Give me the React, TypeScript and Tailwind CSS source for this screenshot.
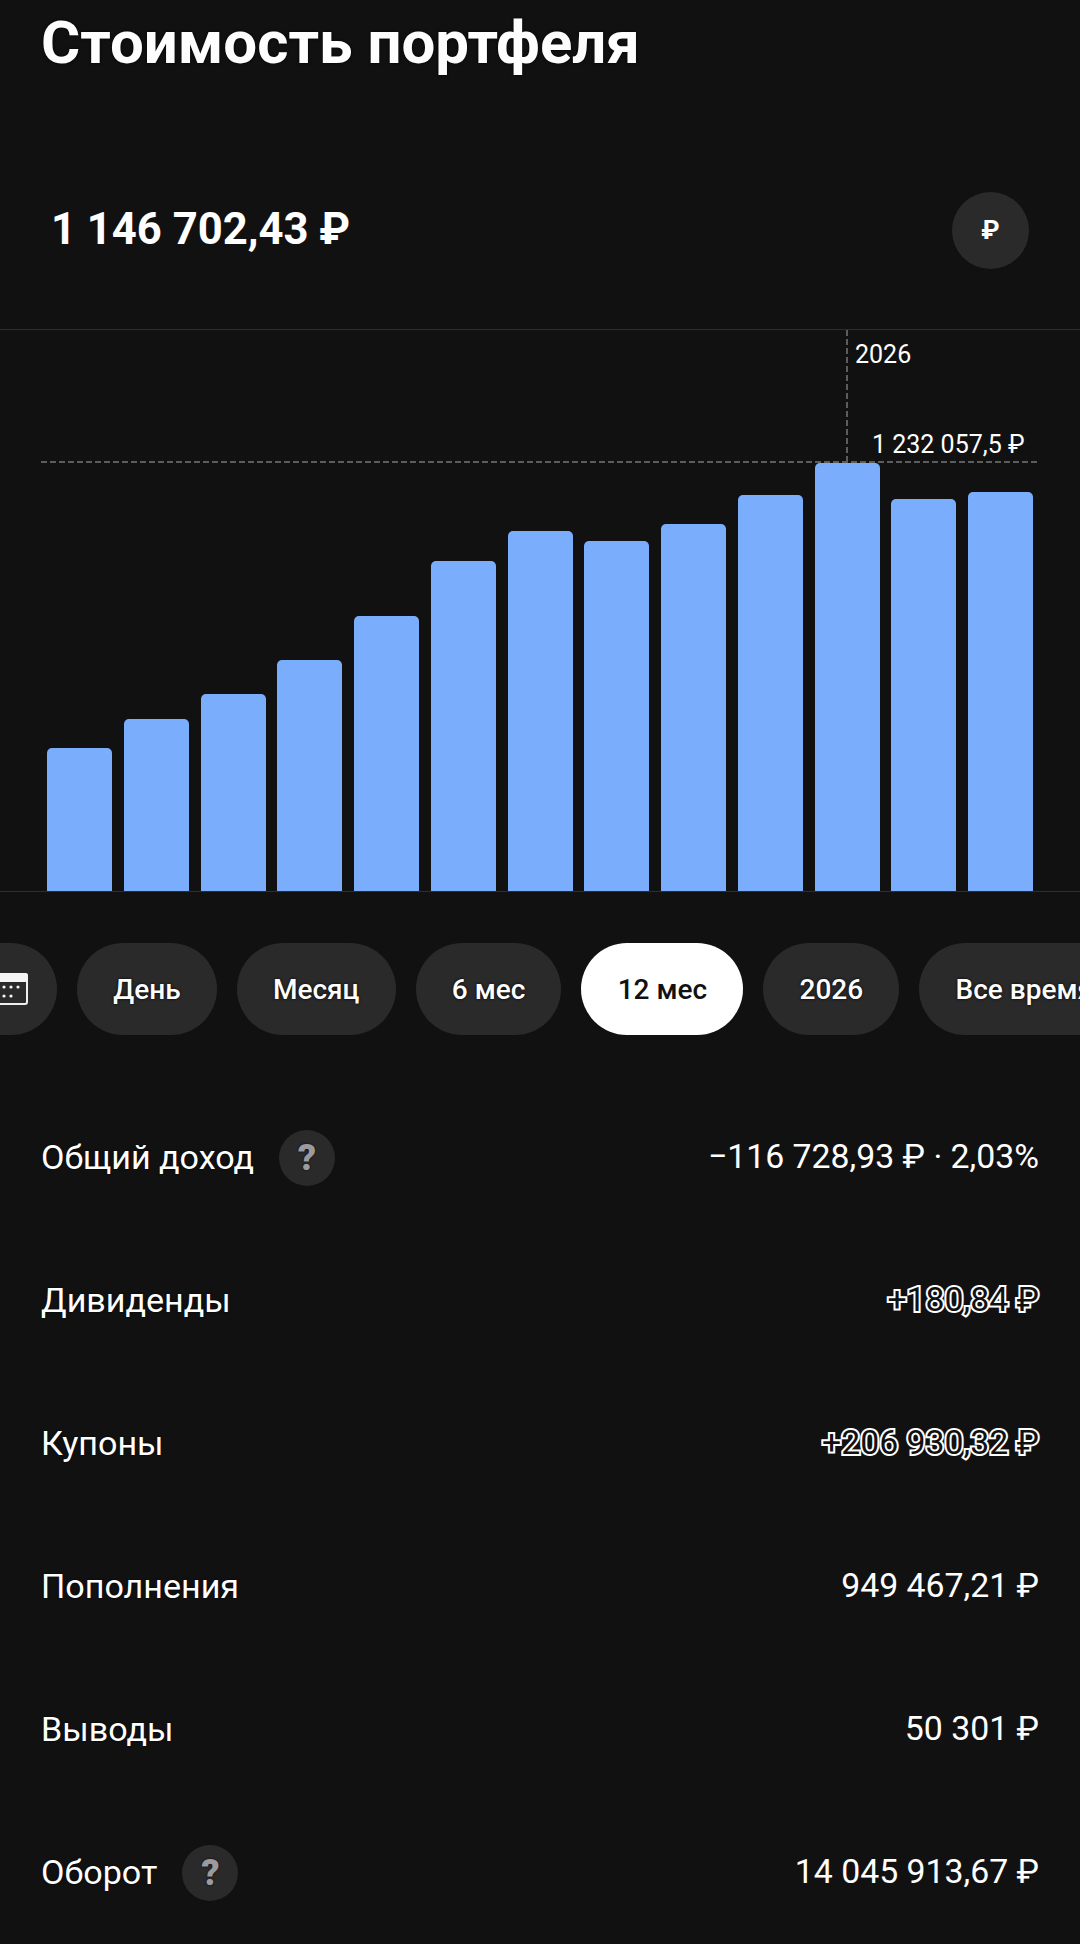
const bars = [143, 172, 197, 231, 275, 330, 360, 350, 367, 396, 428, 392, 399]

const periods = ["День", "Месяц", "6 мес", "12 мес", "2026", "Все время"]

const rows = [
  { label: "Общий доход", value: "−116 728,93 ₽ · 2,03%", help: true },
  { label: "Дивиденды", value: "+180,84 ₽", outlined: true },
  { label: "Купоны", value: "+206 930,32 ₽", outlined: true },
  { label: "Пополнения", value: "949 467,21 ₽" },
  { label: "Выводы", value: "50 301 ₽" },
  { label: "Оборот", value: "14 045 913,67 ₽", help: true },
]

const CalendarIcon = () => (
  <svg width="36" height="32" viewBox="0 0 36 32" fill="none">
    <rect x="1" y="1" width="34" height="30" rx="2" fill="#2a2a2b" stroke="#eeeeee" strokeWidth="2" />
    <rect x="0" y="0" width="36" height="9" rx="3" fill="#f4f4f4" />
    <g fill="#f4f4f4">
      <circle cx="12" cy="14" r="1.6" />
      <circle cx="19" cy="14" r="1.6" />
      <circle cx="26" cy="14" r="1.6" />
      <circle cx="12" cy="23" r="1.6" />
      <circle cx="19" cy="23" r="1.6" />
    </g>
  </svg>
)

const App = () => {
  return (
    <div className="w-[1080px] h-[1944px] overflow-hidden bg-[#111112] text-white font-['Roboto',sans-serif]">

      <h1 className="h-[88px] px-[41px] text-[60px] leading-[86px] font-bold text-[#fdfdfd] [text-shadow:0_0_3px_#000]">
        Стоимость портфеля
      </h1>

      {/* Total value */}
      <div className="flex items-center justify-between mt-[104px] pl-[51px] pr-[51px] h-[77px]">
        <span className="pb-[1px] text-[43.6px] font-bold">1 146 702,43 ₽</span>
        <div className="flex items-center justify-center w-[77px] h-[77px] rounded-full bg-[#2a2a2b] text-[26px] font-bold">
          ₽
        </div>
      </div>

      {/* Chart */}
      <div className="relative mt-[60px] h-[563px] border-y border-[#2e2e2f] flex items-end gap-[11.76px] pl-[47px]">
        {bars.map((height, index) => (
          <div
            key={index}
            className="w-[65px] rounded-t-[5px] bg-[#7aaefc]"
            style={{ height }}
          />
        ))}
        <div className="absolute left-[846px] top-0 h-[132px] w-[2px] bg-[repeating-linear-gradient(to_bottom,#5c5c5d_0,#5c5c5d_6px,transparent_6px,transparent_9px)]" />
        <div className="absolute left-[41px] top-[131px] w-[996px] h-[2px] bg-[repeating-linear-gradient(to_right,#5c5c5d_0,#5c5c5d_6px,transparent_6px,transparent_9px)]" />
        <span className="absolute left-[855px] top-[10px] text-[25px] leading-[30px]">2026</span>
        <span className="absolute left-[872px] top-[100px] text-[25px] leading-[30px]">1 232 057,5 ₽</span>
      </div>

      {/* Period pills */}
      <div className="flex gap-[20px] mt-[51px] -ml-[50px] w-[1130px] overflow-hidden">
        <div className="flex items-center justify-end shrink-0 w-[107px] h-[92px] pr-[29px] rounded-full bg-[#2a2a2b]">
          <CalendarIcon />
        </div>
        {periods.map((period) => (
          <div
            key={period}
            className={
              period === "12 мес"
                ? "flex items-center shrink-0 h-[92px] pt-[1px] px-[36.2px] rounded-full bg-white text-[#111112] text-[28px] font-medium"
                : "flex items-center shrink-0 h-[92px] pt-[1px] px-[36.2px] rounded-full bg-[#2a2a2b] text-[28px] font-medium [text-shadow:0_0_3px_#000]"
            }
          >
            {period}
          </div>
        ))}
      </div>

      {/* Stats */}
      <div className="mt-[51px] px-[41px]">
        {rows.map((row) => (
          <div key={row.label} className="flex items-center justify-between h-[143px]">
            <div className="flex items-center gap-[25px] text-[34.1px] [text-shadow:0_0_2px_#000]">
              <span>{row.label}</span>
              {row.help && (
                <div className="flex items-center justify-center w-[56px] h-[56px] rounded-full bg-[#2a2a2b] text-[#9a9a9f] text-[36px] font-black">
                  ?
                </div>
              )}
            </div>
            <span
              className={
                row.outlined
                  ? "text-[33.8px] text-[#111112] [-webkit-text-stroke:4px_#fff] [paint-order:stroke_fill]"
                  : "text-[33.8px]"
              }
            >
              {row.value}
            </span>
          </div>
        ))}
      </div>

    </div>
  )
}

export default App
